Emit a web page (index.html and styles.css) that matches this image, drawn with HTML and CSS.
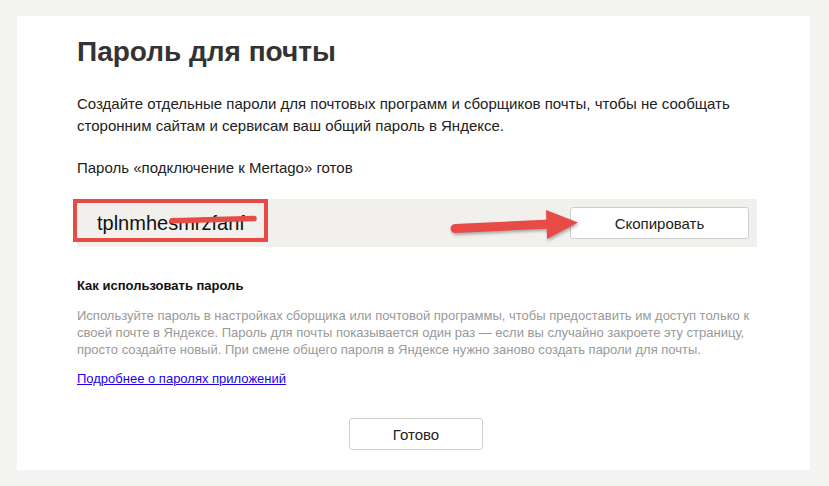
FILE: index.html
```html
<!DOCTYPE html>
<html lang="ru">
<head>
<meta charset="utf-8">
<title>Пароль для почты</title>
<link rel="stylesheet" href="styles.css">
</head>
<body>
<div class="card">
  <h1 class="title">Пароль для почты</h1>
  <p class="lead">Создайте отдельные пароли для почтовых программ и сборщиков почты, чтобы не сообщать сторонним сайтам и сервисам ваш общий пароль в Яндексе.</p>
  <p class="ready">Пароль «подключение к Mertago» готов</p>
  <div class="band">
    <span class="pwd">tplnmhesmrzfanf</span>
    <button class="btn btn-copy">Скопировать</button>
    <span class="redbox"></span>
    <svg class="strike" width="200" height="48" viewBox="0 0 200 48">
      <path d="M95 21.8 L177 19.6" stroke="#e84b46" stroke-width="5.5" stroke-linecap="round" fill="none"/>
    </svg>
    <svg class="arrow" width="520" height="48" viewBox="0 0 520 48">
      <path d="M378 29.5 L474 25" stroke="#e84b46" stroke-width="9" stroke-linecap="round" fill="none"/>
      <path d="M469 11 L501 23.5 L470 40 Z" fill="#e84b46"/>
    </svg>
  </div>
  <h2 class="howto">Как использовать пароль</h2>
  <p class="note">Используйте пароль в настройках сборщика или почтовой программы, чтобы предоставить им доступ только к своей почте в Яндексе. Пароль для почты показывается один раз — если вы случайно закроете эту страницу, просто создайте новый. При смене общего пароля в Яндексе нужно заново создать пароли для почты.</p>
  <a class="more" href="#">Подробнее о паролях приложений</a>
  <div class="actions">
    <button class="btn btn-done">Готово</button>
  </div>
</div>
</body>
</html>
```

FILE: styles.css
```css
html, body {
  margin: 0;
  padding: 0;
}
body {
  background: #f4f4f2;
  font-family: "Liberation Sans", Arial, sans-serif;
  color: #222;
  padding: 16px 19px 16px 17px;
}
.card {
  background: #fff;
  padding: 17px 53px 20px 60px;
  display: flex;
  flex-direction: column;
  align-items: flex-start;
  height: 417px;
}
.title {
  margin: 0;
  font-size: 28px;
  line-height: 37px;
  font-weight: bold;
  color: #333;
}
.lead {
  margin: 23px 0 0;
  font-size: 15px;
  line-height: 22px;
  color: #222;
  width: 680px;
}
.ready {
  margin: 20px 0 0;
  font-size: 15px;
  line-height: 22px;
  color: #222;
}
.band {
  position: relative;
  margin-top: 20px;
  width: 680px;
  height: 48px;
  background: #f1f0ed;
  display: flex;
  align-items: center;
  justify-content: space-between;
  padding: 0 8px 0 20px;
  box-sizing: border-box;
}
.pwd {
  font-size: 20px;
  line-height: 48px;
  color: #111;
}
.btn {
  font-family: "Liberation Sans", Arial, sans-serif;
  font-size: 15px;
  color: #222;
  background: #fff;
  border: 1px solid #cfcfcf;
  border-radius: 3px;
  height: 32px;
  padding: 0;
}
.btn-copy {
  width: 179px;
}
.redbox {
  position: absolute;
  left: -4px;
  top: 0;
  width: 195px;
  height: 43px;
  box-sizing: border-box;
  border: 4px solid #e84b46;
}
.strike {
  position: absolute;
  left: 0;
  top: 0;
}
.arrow {
  position: absolute;
  left: 0;
  top: 0;
  filter: drop-shadow(1px 2px 1.5px rgba(0, 0, 0, 0.3));
}
.howto {
  margin: 30px 0 0;
  font-size: 13px;
  line-height: 18px;
  font-weight: bold;
  color: #111;
}
.note {
  margin: 12px 0 0;
  font-size: 13px;
  line-height: 17px;
  color: #999;
  width: 690px;
}
.more {
  margin-top: 12px;
  font-size: 13px;
  line-height: 17px;
  color: #2200ee;
  text-decoration: underline;
}
.actions {
  margin-top: 31px;
  padding-left: 272px;
}
.btn-done {
  width: 134px;
}
```
